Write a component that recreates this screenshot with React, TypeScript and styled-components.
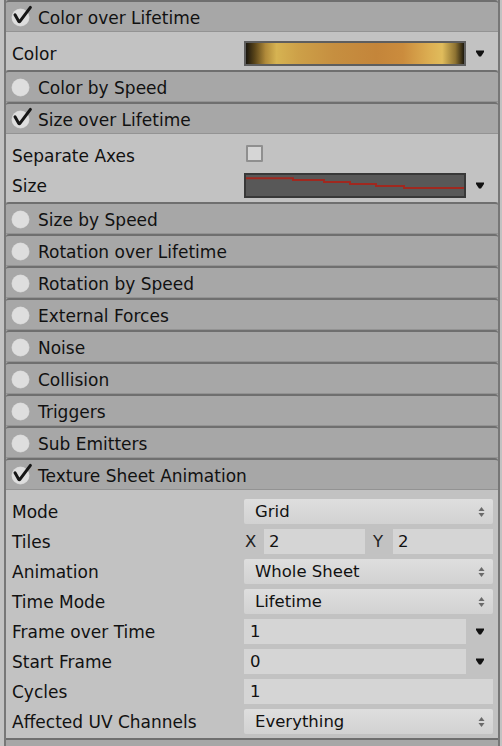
import React from "react";
import styled, { createGlobalStyle } from "styled-components";

const GlobalStyle = createGlobalStyle`
  html, body { margin: 0; padding: 0; background: #c2c2c2; }
  body { font-family: "DejaVu Sans", "Liberation Sans", sans-serif; color: #111; }
  * { box-sizing: border-box; }
`;

const Panel = styled.div`
  margin-left: 4px;
  width: 496px;
  border-left: 2px solid #777;
  border-right: 2px solid #777;
  height: 746px;
  overflow: hidden;
  background: #a7a7a7;
`;

const Header = styled.div`
  height: 32px;
  display: flex;
  align-items: center;
  padding-left: 6px;
  padding-top: 2px;
  background: #a7a7a7;
  border-top: 2px solid #6f6f6f;
  border-bottom: 1px solid #939393;
  font-size: 17px;
  color: #111;
  border-radius: 3px 3px 0 0;
`;

const Toggle = styled.span`
  position: relative;
  width: 17px;
  height: 17px;
  margin-top: -1px;
  border-radius: 50%;
  background: #dedede;
  box-shadow: 0 0 0 0.5px #cfcfcf;
  margin-right: 9px;
  flex: none;
`;

const CheckMark = styled.svg`
  position: absolute;
  left: 1px;
  top: -3px;
  overflow: visible;
`;

const Content = styled.div`
  background: #c2c2c2;
  padding: 6px 0 2px;
`;

const Row = styled.div`
  height: 30px;
  display: grid;
  grid-template-columns: 232px 1fr;
  align-items: center;
  padding: 0 5px 0 6px;
  font-size: 17px;
`;

const Label = styled.span`
  white-space: nowrap;
  color: #111;
  padding-top: 2px;
`;

const ValueLine = styled.div`
  display: flex;
  align-items: center;
  height: 25px;
`;

const CurveBox = styled.div<{ $dark?: boolean }>`
  width: 222px;
  height: 25px;
  border: 2px solid ${(p) => (p.$dark ? "#383838" : "#5e5e5e")};
  background: ${(p) => (p.$dark ? "#585858" : "none")};
  flex: none;
`;

const GradientFill = styled.div`
  width: 100%;
  height: 100%;
  background: linear-gradient(
    to right,
    #1a160e 0%,
    #5a4519 4%,
    #b08a3a 9%,
    #d6b352 14%,
    #cda048 24%,
    #c68f40 40%,
    #c4853a 60%,
    #cb8c3d 72%,
    #dcae52 84%,
    #e0bc5c 90%,
    #8e7332 96%,
    #1d180c 100%
  );
`;

const ArrowSlot = styled.div`
  flex: 1;
  display: flex;
  justify-content: center;
  align-items: center;
  padding-left: 1px;
`;

const Popup = styled.div`
  width: 100%;
  height: 25px;
  display: flex;
  align-items: center;
  justify-content: space-between;
  padding: 1px 8px 0 11px;
  background: linear-gradient(to bottom, #dedede, #d2d2d2);
  border-radius: 2px;
  font-size: 16.5px;
  color: #111;
`;

const TextField = styled.div<{ $w?: number; $pad?: number }>`
  width: ${(p) => (p.$w ? `${p.$w}px` : "100%")};
  height: 25px;
  display: flex;
  align-items: center;
  padding-left: ${(p) => p.$pad ?? 6}px;
  padding-top: 1px;
  background: #d5d5d5;
  font-size: 16.5px;
  color: #111;
  flex: none;
`;

const AxisLabel = styled.span<{ $w: number; $pl?: number }>`
  width: ${(p) => p.$w}px;
  padding-left: ${(p) => p.$pl ?? 1}px;
  padding-top: 1px;
  font-size: 16.5px;
  color: #222;
  flex: none;
`;

const CheckBox = styled.span`
  width: 17px;
  height: 17px;
  margin-left: 2px;
  margin-top: -4px;
  border: 2px solid #8f8f8f;
  background: #d6d6d6;
  border-radius: 1px;
`;

const Foot = styled.div`
  height: 20px;
  background: #a7a7a7;
  border-top: 2px solid #6f6f6f;
`;

const CurveArrow = () => (
  <svg width="8" height="7" viewBox="0 0 8 7">
    <path d="M0 0.5 H8 V2 L5 6.5 H3 L0 2 Z" fill="#111" />
  </svg>
);

const UpDown = () => (
  <svg width="7" height="12" viewBox="0 0 7 12">
    <path d="M0.5 5 L3.5 1 L6.5 5 Z" fill="#6a6a6a" />
    <path d="M0.5 7 L3.5 11 L6.5 7 Z" fill="#6a6a6a" />
  </svg>
);

const ModuleHeader: React.FC<{ title: string; checked?: boolean }> = ({ title, checked }) => (
  <Header>
    <Toggle>
      {checked && (
        <CheckMark width="18" height="18" viewBox="0 0 18 18">
          <path
            d="M2 8.8 L5.8 15.4 Q6.3 16.2 6.9 15.4 L17.4 1.4"
            fill="none"
            stroke="#161616"
            strokeWidth="3"
            strokeLinecap="round"
            strokeLinejoin="round"
          />
        </CheckMark>
      )}
    </Toggle>
    {title}
  </Header>
);

const SizeCurve = () => (
  <CurveBox $dark>
    <svg width="218" height="21" viewBox="0 0 218 21">
      <path
        d="M0 3.3 H47 V5 H78 V7 H104 V9 H130 V11 H158 V13 H218"
        fill="none"
        stroke="#a0281f"
        strokeWidth="2"
      />
    </svg>
  </CurveBox>
);

const PopupField: React.FC<{ value: string }> = ({ value }) => (
  <Popup>
    {value}
    <UpDown />
  </Popup>
);

const CurveField: React.FC<{ value: string }> = ({ value }) => (
  <ValueLine>
    <TextField $w={222}>{value}</TextField>
    <ArrowSlot>
      <CurveArrow />
    </ArrowSlot>
  </ValueLine>
);

const collapsed = [
  "Size by Speed",
  "Rotation over Lifetime",
  "Rotation by Speed",
  "External Forces",
  "Noise",
  "Collision",
  "Triggers",
  "Sub Emitters",
];

export default function App() {
  return (
    <>
      <GlobalStyle />
      <Panel>
        <ModuleHeader title="Color over Lifetime" checked />
        <Content>
          <Row>
            <Label>Color</Label>
            <ValueLine>
              <CurveBox>
                <GradientFill />
              </CurveBox>
              <ArrowSlot>
                <CurveArrow />
              </ArrowSlot>
            </ValueLine>
          </Row>
        </Content>
        <ModuleHeader title="Color by Speed" />
        <ModuleHeader title="Size over Lifetime" checked />
        <Content>
          <Row>
            <Label>Separate Axes</Label>
            <ValueLine>
              <CheckBox />
            </ValueLine>
          </Row>
          <Row>
            <Label>Size</Label>
            <ValueLine>
              <SizeCurve />
              <ArrowSlot>
                <CurveArrow />
              </ArrowSlot>
            </ValueLine>
          </Row>
        </Content>
        {collapsed.map((t) => (
          <ModuleHeader key={t} title={t} />
        ))}
        <ModuleHeader title="Texture Sheet Animation" checked />
        <Content>
          <Row>
            <Label>Mode</Label>
            <PopupField value="Grid" />
          </Row>
          <Row>
            <Label>Tiles</Label>
            <ValueLine>
              <AxisLabel $w={20}>X</AxisLabel>
              <TextField $w={101} $pad={5}>2</TextField>
              <AxisLabel $w={28} $pl={8}>Y</AxisLabel>
              <TextField $w={100} $pad={5}>2</TextField>
            </ValueLine>
          </Row>
          <Row>
            <Label>Animation</Label>
            <PopupField value="Whole Sheet" />
          </Row>
          <Row>
            <Label>Time Mode</Label>
            <PopupField value="Lifetime" />
          </Row>
          <Row>
            <Label>Frame over Time</Label>
            <CurveField value="1" />
          </Row>
          <Row>
            <Label>Start Frame</Label>
            <CurveField value="0" />
          </Row>
          <Row>
            <Label>Cycles</Label>
            <ValueLine>
              <TextField>1</TextField>
            </ValueLine>
          </Row>
          <Row>
            <Label>Affected UV Channels</Label>
            <PopupField value="Everything" />
          </Row>
        </Content>
        <Foot />
      </Panel>
    </>
  );
}
